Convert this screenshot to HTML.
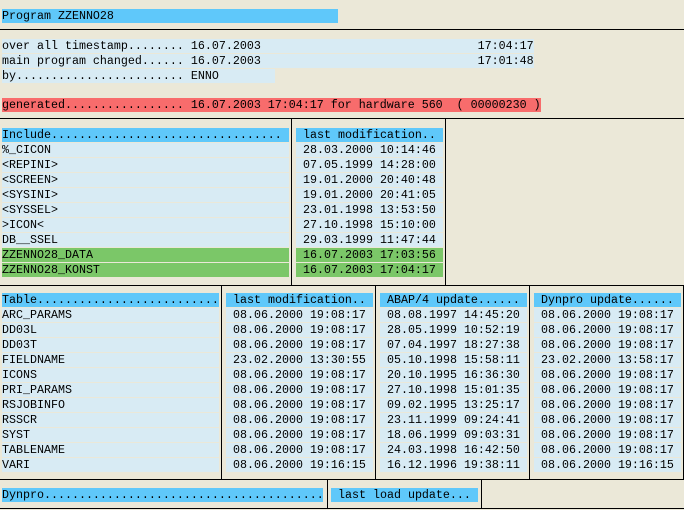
<!DOCTYPE html>
<html><head><meta charset="utf-8"><style>
body{margin:0;width:684px;height:510px;background:#ebe8d8;position:relative;overflow:hidden;font-family:"Liberation Mono",monospace;font-size:11.67px;color:#000}
.r{position:absolute;height:14px;line-height:15px;white-space:pre;overflow:hidden;background:#d8ebf4}
.h{background:#5fc8fa}.g{background:#7bc768}.red{background:#f86c6c}
.hl{position:absolute;left:0;width:684px;height:1px;background:#000}
.vl{position:absolute;width:1px;background:#000}
</style></head><body>
<div class="r h" style="left:2px;top:9px;width:336px">Program ZZENNO28</div>
<div class="hl" style="top:29px"></div>
<div class="r" style="left:2px;top:39px;width:532px">over all timestamp........ 16.07.2003                               17:04:17</div>
<div class="r" style="left:2px;top:54px;width:532px">main program changed...... 16.07.2003                               17:01:48</div>
<div class="r" style="left:2px;top:69px;width:273px">by........................ ENNO</div>
<div class="r red" style="left:2px;top:98px;width:539px">generated................. 16.07.2003 17:04:17 for hardware 560  ( 00000230 )</div>
<div class="hl" style="top:118px"></div>
<div class="vl" style="left:291px;top:119px;height:166px"></div>
<div class="vl" style="left:445px;top:119px;height:166px"></div>
<div class="r h" style="left:2px;top:128px;width:287px">Include.................................</div>
<div class="r h" style="left:296px;top:128px;width:147px"> last modification..</div>
<div class="r" style="left:2px;top:143px;width:287px">%_CICON</div><div class="r" style="left:296px;top:143px;width:147px"> 28.03.2000 10:14:46</div>
<div class="r" style="left:2px;top:158px;width:287px">&lt;REPINI&gt;</div><div class="r" style="left:296px;top:158px;width:147px"> 07.05.1999 14:28:00</div>
<div class="r" style="left:2px;top:173px;width:287px">&lt;SCREEN&gt;</div><div class="r" style="left:296px;top:173px;width:147px"> 19.01.2000 20:40:48</div>
<div class="r" style="left:2px;top:188px;width:287px">&lt;SYSINI&gt;</div><div class="r" style="left:296px;top:188px;width:147px"> 19.01.2000 20:41:05</div>
<div class="r" style="left:2px;top:203px;width:287px">&lt;SYSSEL&gt;</div><div class="r" style="left:296px;top:203px;width:147px"> 23.01.1998 13:53:50</div>
<div class="r" style="left:2px;top:218px;width:287px">&gt;ICON&lt;</div><div class="r" style="left:296px;top:218px;width:147px"> 27.10.1998 15:10:00</div>
<div class="r" style="left:2px;top:233px;width:287px">DB__SSEL</div><div class="r" style="left:296px;top:233px;width:147px"> 29.03.1999 11:47:44</div>
<div class="r g" style="left:2px;top:248px;width:287px">ZZENNO28_DATA</div><div class="r g" style="left:296px;top:248px;width:147px"> 16.07.2003 17:03:56</div>
<div class="r g" style="left:2px;top:263px;width:287px">ZZENNO28_KONST</div><div class="r g" style="left:296px;top:263px;width:147px"> 16.07.2003 17:04:17</div>
<div class="hl" style="top:285px"></div>
<div class="vl" style="left:221px;top:285px;height:194px"></div>
<div class="vl" style="left:375px;top:285px;height:194px"></div>
<div class="vl" style="left:529px;top:285px;height:194px"></div>
<div class="vl" style="left:683px;top:285px;height:194px"></div>
<div class="r h" style="left:2px;top:293px;width:217px">Table...........................</div>
<div class="r h" style="left:226px;top:293px;width:147px"> last modification..</div>
<div class="r h" style="left:380px;top:293px;width:147px"> ABAP/4 update......</div>
<div class="r h" style="left:534px;top:293px;width:147px"> Dynpro update......</div>
<div class="r" style="left:2px;top:308px;width:217px">ARC_PARAMS</div><div class="r" style="left:226px;top:308px;width:147px"> 08.06.2000 19:08:17</div><div class="r" style="left:380px;top:308px;width:147px"> 08.08.1997 14:45:20</div><div class="r" style="left:534px;top:308px;width:147px"> 08.06.2000 19:08:17</div>
<div class="r" style="left:2px;top:323px;width:217px">DD03L</div><div class="r" style="left:226px;top:323px;width:147px"> 08.06.2000 19:08:17</div><div class="r" style="left:380px;top:323px;width:147px"> 28.05.1999 10:52:19</div><div class="r" style="left:534px;top:323px;width:147px"> 08.06.2000 19:08:17</div>
<div class="r" style="left:2px;top:338px;width:217px">DD03T</div><div class="r" style="left:226px;top:338px;width:147px"> 08.06.2000 19:08:17</div><div class="r" style="left:380px;top:338px;width:147px"> 07.04.1997 18:27:38</div><div class="r" style="left:534px;top:338px;width:147px"> 08.06.2000 19:08:17</div>
<div class="r" style="left:2px;top:353px;width:217px">FIELDNAME</div><div class="r" style="left:226px;top:353px;width:147px"> 23.02.2000 13:30:55</div><div class="r" style="left:380px;top:353px;width:147px"> 05.10.1998 15:58:11</div><div class="r" style="left:534px;top:353px;width:147px"> 23.02.2000 13:58:17</div>
<div class="r" style="left:2px;top:368px;width:217px">ICONS</div><div class="r" style="left:226px;top:368px;width:147px"> 08.06.2000 19:08:17</div><div class="r" style="left:380px;top:368px;width:147px"> 20.10.1995 16:36:30</div><div class="r" style="left:534px;top:368px;width:147px"> 08.06.2000 19:08:17</div>
<div class="r" style="left:2px;top:383px;width:217px">PRI_PARAMS</div><div class="r" style="left:226px;top:383px;width:147px"> 08.06.2000 19:08:17</div><div class="r" style="left:380px;top:383px;width:147px"> 27.10.1998 15:01:35</div><div class="r" style="left:534px;top:383px;width:147px"> 08.06.2000 19:08:17</div>
<div class="r" style="left:2px;top:398px;width:217px">RSJOBINFO</div><div class="r" style="left:226px;top:398px;width:147px"> 08.06.2000 19:08:17</div><div class="r" style="left:380px;top:398px;width:147px"> 09.02.1995 13:25:17</div><div class="r" style="left:534px;top:398px;width:147px"> 08.06.2000 19:08:17</div>
<div class="r" style="left:2px;top:413px;width:217px">RSSCR</div><div class="r" style="left:226px;top:413px;width:147px"> 08.06.2000 19:08:17</div><div class="r" style="left:380px;top:413px;width:147px"> 23.11.1999 09:24:41</div><div class="r" style="left:534px;top:413px;width:147px"> 08.06.2000 19:08:17</div>
<div class="r" style="left:2px;top:428px;width:217px">SYST</div><div class="r" style="left:226px;top:428px;width:147px"> 08.06.2000 19:08:17</div><div class="r" style="left:380px;top:428px;width:147px"> 18.06.1999 09:03:31</div><div class="r" style="left:534px;top:428px;width:147px"> 08.06.2000 19:08:17</div>
<div class="r" style="left:2px;top:443px;width:217px">TABLENAME</div><div class="r" style="left:226px;top:443px;width:147px"> 08.06.2000 19:08:17</div><div class="r" style="left:380px;top:443px;width:147px"> 24.03.1998 16:42:50</div><div class="r" style="left:534px;top:443px;width:147px"> 08.06.2000 19:08:17</div>
<div class="r" style="left:2px;top:458px;width:217px">VARI</div><div class="r" style="left:226px;top:458px;width:147px"> 08.06.2000 19:16:15</div><div class="r" style="left:380px;top:458px;width:147px"> 16.12.1996 19:38:11</div><div class="r" style="left:534px;top:458px;width:147px"> 08.06.2000 19:16:15</div>
<div class="hl" style="top:479px"></div>
<div class="vl" style="left:327px;top:479px;height:30px"></div>
<div class="vl" style="left:481px;top:479px;height:30px"></div>
<div class="r h" style="left:2px;top:488px;width:321px">Dynpro..........................................</div>
<div class="r h" style="left:331px;top:488px;width:147px"> last load update...</div>
<div class="hl" style="top:508px"></div>
</body></html>
